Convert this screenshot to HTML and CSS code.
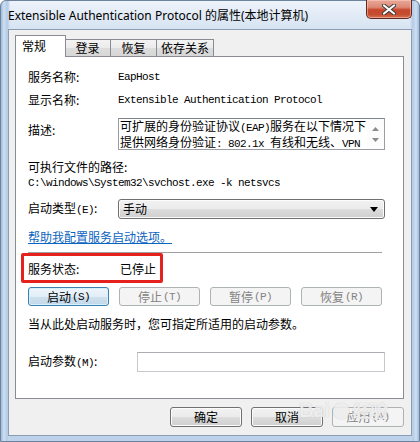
FILE: index.html
```html
<!DOCTYPE html>
<html lang="zh-CN">
<head>
<meta charset="utf-8">
<title>Extensible Authentication Protocol 的属性(本地计算机)</title>
<link rel="stylesheet" href="styles.css">
</head>
<body>
<div class="window">
  <div class="titlebar">
    <span class="title">Extensible Authentication Protocol 的属性(本地计算机)</span>
    <button class="close" aria-label="关闭">
      <svg width="14" height="11" viewBox="0 0 14 11">
        <path d="M2 1.5 L12 9.5 M12 1.5 L2 9.5" stroke="#3a3a3a" stroke-width="4" stroke-linecap="round"/>
        <path d="M2 1.5 L12 9.5 M12 1.5 L2 9.5" stroke="#ffffff" stroke-width="2.2" stroke-linecap="round"/>
      </svg>
    </button>
  </div>
  <div class="client">
    <div class="tabs">
      <div class="tab active">常规</div>
      <div class="tab">登录</div>
      <div class="tab">恢复</div>
      <div class="tab">依存关系</div>
    </div>
    <div class="panel">
      <div class="row r1"><span class="label">服务名称:</span><span class="m">EapHost</span></div>
      <div class="row r2"><span class="label">显示名称:</span><span class="m">Extensible Authentication Protocol</span></div>
      <div class="row r3">
        <span class="label lab-desc">描述:</span>
        <div class="descbox">
          <div class="desctext">
            <div>可扩展的身份验证协议<span class="m">(EAP)</span>服务在以下情况下</div>
            <div>提供网络身份验证<span class="m">: 802.1x </span>有线和无线、<span class="m">VPN</span></div>
          </div>
          <div class="scroll">
            <svg width="7" height="4" viewBox="0 0 7 4"><path d="M0 4 L3.5 0 L7 4 Z" fill="#8a8a8a"/></svg>
            <svg width="7" height="4" viewBox="0 0 7 4"><path d="M0 0 L3.5 4 L7 0 Z" fill="#8a8a8a"/></svg>
          </div>
        </div>
      </div>
      <div class="pathlabel">可执行文件的路径:</div>
      <div class="m path">C:\windows\System32\svchost.exe -k netsvcs</div>
      <div class="row r5">
        <span class="label">启动类型<span class="m">(E)</span>:</span>
        <div class="select">
          <span>手动</span>
          <svg width="8" height="5" viewBox="0 0 8 5"><path d="M0 0 L8 0 L4 5 Z" fill="#000"/></svg>
        </div>
      </div>
      <a class="link" href="#">帮助我配置服务启动选项。</a>
      <div class="sep"></div>
      <div class="status">
        <span class="label st-label">服务状态:</span><span>已停止</span>
      </div>
      <div class="btnrow">
        <button class="btn default">启动<span class="m">(S)</span></button>
        <button class="btn disabled">停止<span class="m">(T)</span></button>
        <button class="btn disabled">暂停<span class="m">(P)</span></button>
        <button class="btn disabled">恢复<span class="m">(R)</span></button>
      </div>
      <div class="hint">当从此处启动服务时，您可指定所适用的启动参数。</div>
      <div class="row r8">
        <span class="label param-label">启动参数<span class="m">(M)</span>:</span>
        <div class="input"></div>
      </div>
    </div>
    <div class="footer">
      <button class="btn fbtn">确定</button>
      <button class="btn fbtn">取消</button>
      <button class="btn fbtn disabled">应用<span class="m">(A)</span></button>
    </div>
    <div class="watermark"><span class="wm-bai">Bai</span><span class="wm-paw">●</span><span class="wm-jy">经验</span></div>
  </div>
</div>
</body>
</html>
```
FILE: styles.css
```css
* { box-sizing: border-box; }
html, body { margin: 0; padding: 0; }
body {
  width: 420px;
  height: 442px;
  overflow: hidden;
  font-family: "Noto Sans CJK SC", "Noto Sans", sans-serif;
  font-size: 12px;
  line-height: 16px;
  color: #000;
}
.m {
  font-family: "Liberation Mono", "Noto Sans CJK SC", monospace;
  font-size: 11px;
  letter-spacing: -0.6px;
}
.window {
  width: 420px;
  height: 442px;
  display: flex;
  flex-direction: column;
  padding: 0 0 5px 0;
  border-radius: 6px 6px 0 0;
  border: 1px solid #6d829d;
  background:
    linear-gradient(90deg, #9fbbdc 0, #cfe0f2 3px, #b4cbe6 6px, #c8d9ee 8px, rgba(200,217,238,0) 9px),
    linear-gradient(270deg, #9fbbdc 0, #cfe0f2 3px, #b4cbe6 6px, #c8d9ee 8px, rgba(200,217,238,0) 9px),
    linear-gradient(180deg, #eef3fa 0, #e2ebf6 14px, #d6e3f2 29px, #c6d8ee 200px, #bcd1ea 100%);
}
.titlebar {
  height: 28px;
  display: flex;
  justify-content: space-between;
  align-items: flex-start;
  padding-left: 7px;
  padding-right: 7px;
}
.title {
  font-family: "Noto Sans", "Noto Sans CJK SC", sans-serif;
  font-size: 12px;
  line-height: 16px;
  margin-top: 7px;
  white-space: nowrap;
}
.close {
  width: 46px;
  height: 19px;
  margin-top: -1px;
  padding: 0;
  border: 1px solid #5e2a1f;
  border-top: none;
  border-radius: 0 0 5px 5px;
  background: linear-gradient(180deg, #e9a898 0, #dc8a77 40%, #c8462d 55%, #c44d30 80%, #d77252 100%);
  box-shadow: inset 0 0 0 1px rgba(255,210,200,0.5);
  display: flex;
  align-items: center;
  justify-content: center;
}
.client {
  flex: 1;
  position: relative;
  margin: 0 7px;
  background: #f0f0f0;
  border: 1px solid #8c9db3;
  padding: 5px 7px 8px 6px;
  display: flex;
  flex-direction: column;
}
.tabs {
  height: 21px;
  display: flex;
  align-items: flex-end;
  position: relative;
  z-index: 2;
}
.tab {
  height: 17px;
  padding: 0 4px;
  min-width: 47px;
  margin-left: -1px;
  border: 1px solid #898c95;
  border-bottom: none;
  background: linear-gradient(180deg, #f3f3f3 0, #ebebeb 50%, #dddddd 50%, #d6d6d6 100%);
  text-align: center;
  line-height: 16px;
  white-space: nowrap;
}
.tab.active {
  height: 22px;
  width: 51px;
  margin-left: 0;
  margin-right: -2px;
  margin-bottom: -1px;
  background: #fff;
  text-align: left;
  padding: 2px 0 0 6px;
  position: relative;
  z-index: 3;
}
.tab.active + .tab { margin-left: 0; }
.panel {
  flex: 1;
  width: 389px;
  background: #fff;
  border: 1px solid #898c95;
  padding: 12px 17px 0 12px;
  display: flex;
  flex-direction: column;
  align-items: flex-start;
}
.row {
  display: flex;
  align-items: center;
  white-space: nowrap;
}
.label { width: 90px; flex: none; }
.r2 { margin-top: 7px; }
.r3 { margin-top: 10px; align-items: flex-start; }
.lab-desc { padding-top: 4px; }
.descbox {
  width: 267px;
  height: 32px;
  border: 1px solid #9a9da4;
  border-top-color: #7f838a;
  display: flex;
  background: #fff;
}
.desctext {
  flex: 1;
  overflow-x: clip;
  overflow-y: visible;
  white-space: nowrap;
  padding: 0 0 0 1px;
  line-height: 14px;
}
.scroll {
  width: 17px;
  flex: none;
  display: flex;
  flex-direction: column;
  justify-content: space-between;
  align-items: center;
  padding: 8px 0 7px;
  background: #fcfcfc;
}
.pathlabel { margin-top: 9px; }
.path { white-space: nowrap; }
.r5 { margin-top: 8px; }
.select {
  width: 267px;
  height: 20px;
  border: 1px solid #707070;
  border-radius: 3px;
  background: linear-gradient(180deg, #f2f2f2 0, #ebebeb 50%, #dddddd 50%, #cfcfcf 100%);
  box-shadow: inset 0 0 0 1px #fcfcfc;
  display: flex;
  align-items: center;
  justify-content: space-between;
  padding: 0 6px 0 4px;
}
.link {
  margin-top: 10px;
  color: #0b64c0;
  text-decoration: underline;
}
.sep {
  margin-top: 7px;
  width: 354px;
  height: 1px;
  background: #a0a0a0;
}
.status {
  margin-left: -7px;
  width: 142px;
  height: 30px;
  border: 3px solid #e4211d;
  border-radius: 2px;
  padding: 5px 0 0 4px;
  display: flex;
  white-space: nowrap;
}
.st-label { width: 92px; }
.btnrow {
  margin-top: 4px;
  width: 354px;
  display: flex;
  justify-content: space-between;
}
.btn {
  font-family: "Noto Sans CJK SC", sans-serif;
  font-size: 12px;
  line-height: 16px;
  height: 19px;
  width: 81px;
  padding: 0;
  border: 1px solid #707070;
  border-radius: 3px;
  color: #000;
  background: linear-gradient(180deg, #f2f2f2 0, #ebebeb 50%, #dddddd 50%, #cfcfcf 100%);
  box-shadow: inset 0 0 0 1px #fcfcfc;
  display: flex;
  align-items: center;
  justify-content: center;
}
.btn .m { margin-left: 1px; }
.btn.default {
  border-color: #3c7fb1;
  background: linear-gradient(180deg, #eef5fa 0, #e2eef7 50%, #cfe1ee 50%, #c2d8e9 100%);
  box-shadow: inset 0 0 0 1px #d6f0fc;
}
.btn.disabled {
  border-color: #adb2b5;
  background: #f4f4f4;
  box-shadow: none;
  color: #838383;
}
.hint { margin-top: 10px; white-space: nowrap; }
.r8 { margin-top: 20px; }
.param-label { width: 109px; }
.input {
  width: 248px;
  height: 20px;
  border: 1px solid #c5c8cd;
  border-top-color: #abadb3;
  background: #fff;
}
.footer {
  margin-top: 8px;
  display: flex;
  justify-content: flex-end;
  gap: 9px;
}
.fbtn { width: 72px; height: 20px; }
.watermark {
  position: absolute;
  left: 290px;
  top: 372px;
  display: flex;
  align-items: center;
  gap: 2px;
  color: rgba(255,255,255,0.75);
  text-shadow: 0 0 1px rgba(120,120,120,0.45);
  pointer-events: none;
}
.wm-bai { font-family: "Liberation Sans", sans-serif; font-weight: bold; font-size: 20px; }
.wm-paw { font-size: 18px; }
.wm-jy { font-size: 18px; font-weight: bold; }
```
